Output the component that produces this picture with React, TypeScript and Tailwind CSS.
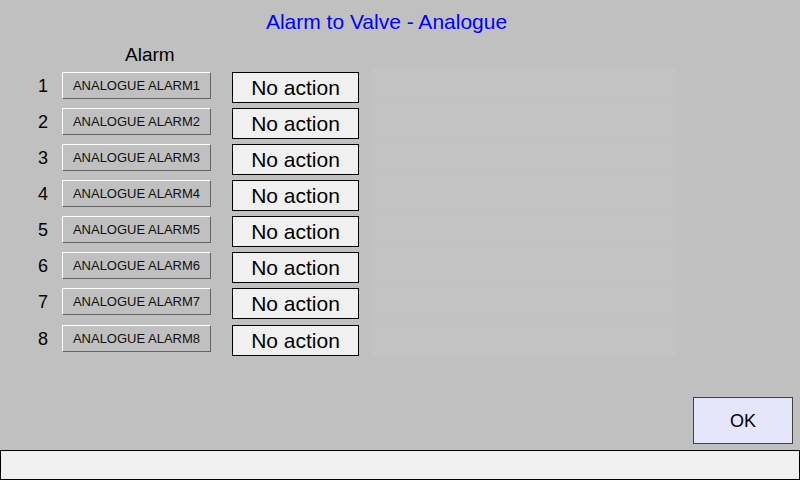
import React from "react";

const rows = [1, 2, 3, 4, 5, 6, 7, 8];

export default function App() {
  return (
    <div
      className="w-[800px] h-[480px] bg-[#c0c0c0] flex flex-col overflow-hidden text-black"
      style={{ fontFamily: '"Liberation Sans", Arial, sans-serif' }}
    >
      <div className="h-[44px] pt-[10px] pr-[27px] text-center text-[21px] leading-[24px] text-[#0000ff]">
        Alarm to Valve - Analogue
      </div>
      <div className="h-[28px] pl-[125px] text-[19px] leading-[20px] pt-[1px]">Alarm</div>
      <div className="flex flex-col">
        {rows.map((n) => (
          <div key={n} className={`flex items-start h-[36px] ${n === 8 ? "mt-[1px]" : ""}`}>
            <div className="w-[62px] h-[27px] pr-[14px] flex items-center justify-end text-[18px] leading-none">
              {n}
            </div>
            <div className="w-[149px] h-[27px] border border-t-white border-l-white border-b-[#646464] border-r-[#646464] bg-[#c0c0c0] flex items-center justify-center text-[13px] leading-none text-[#101010]">
              ANALOGUE ALARM{n}
            </div>
            <div className="ml-[21px] w-[127px] h-[31px] border border-black bg-[#f0f0f0] flex items-center justify-center pb-[1px] text-[21px] leading-none">
              No action
            </div>
            <div className="ml-[13px] -mt-[4px] w-[304px] h-[35px] bg-[#c3c3c3]" />
          </div>
        ))}
      </div>
      <div className="flex-1" />
      <div className="flex justify-end pr-[7px] mb-[6px]">
        <div className="w-[100px] h-[47px] bg-[#e6e6fa] border border-[#404040] flex items-center justify-center text-[18px] leading-none">
          OK
        </div>
      </div>
      <div className="h-[30px] w-full border border-black bg-[#f0f0f0]" />
    </div>
  );
}
